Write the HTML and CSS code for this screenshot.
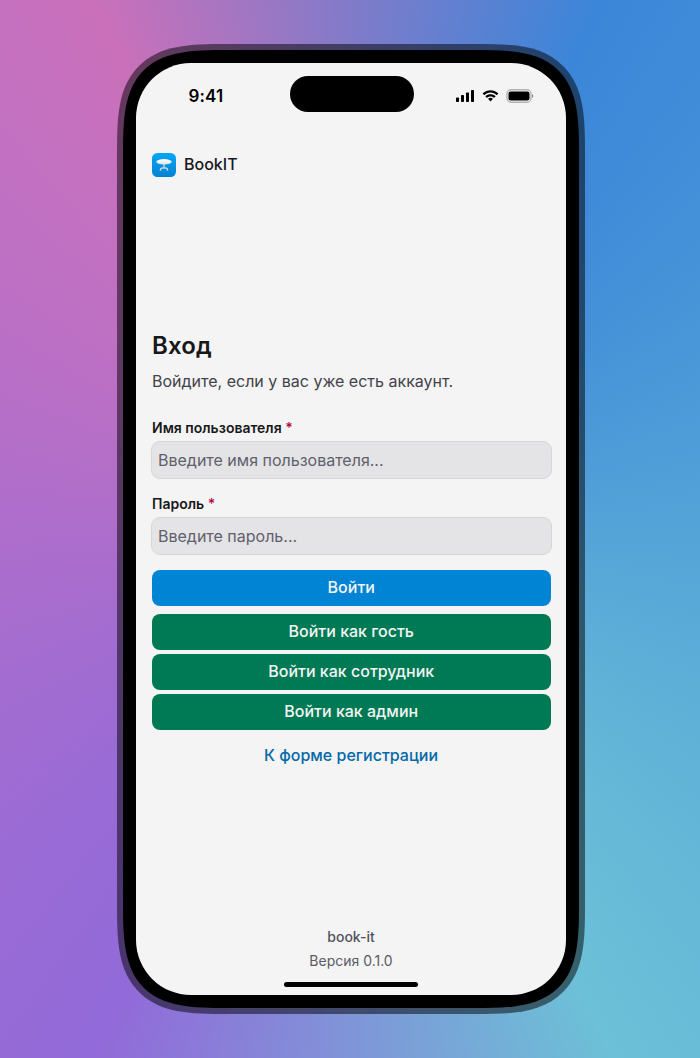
FILE: index.html
```html
<!DOCTYPE html>
<html lang="ru">
<head>
<meta charset="utf-8">
<title>BookIT</title>
<link rel="stylesheet" href="styles.css">
</head>
<body>
<main class="stage">
  <div class="phone">
    <svg class="bezel" viewBox="0 0 468 970" aria-hidden="true">
      <path class="bezel-rim" d="M0 110C0 72 1 43 22 22C43 1 72 0 110 0H358C396 0 425 1 446 22C467 43 468 72 468 110V860C468 898 467 927 446 948C425 969 396 970 358 970H110C72 970 43 969 22 948C1 927 0 898 0 860Z"/>
      <path class="bezel-body" d="M6 110C6 76 7 46 26.500 26.500C46 7 76 6 110 6H358C392 6 422 7 441.500 26.500C461 46 462 76 462 110V860C462 894 461 924 441.500 943.500C422 963 392 964 358 964H110C76 964 46 963 26.500 943.500C7 924 6 894 6 860Z"/>
    </svg>
    <div class="screen">
      <div class="status">
        <span class="clock">9:41</span>
        <span class="island"></span>
        <div class="indicators">
          <svg class="signal" width="18" height="12" viewBox="0 0 18 12"><rect y="7.5" width="3" height="4.5" rx=".8"/><rect x="5" y="5" width="3" height="7" rx=".8"/><rect x="10" y="2.5" width="3" height="9.5" rx=".8"/><rect x="15" width="3" height="12" rx=".8"/></svg>
          <svg class="wifi" width="17" height="12" viewBox="0 0 17 12"><path d="M8.500 2.600c2.300 0 4.400.9 6 2.400.15.12.3.12.43 0l1.200-1.200c.15-.15.15-.35 0-.5C11.900-.7 5.100-.7.87 3.300c-.15.15-.15.35 0 .5l1.200 1.200c.13.12.28.12.43 0 1.600-1.500 3.700-2.400 6-2.400zM8.500 6.500c1.200 0 2.400.5 3.300 1.300.13.12.32.12.44 0l1.200-1.200c.14-.15.14-.36 0-.5-2.800-2.600-7.100-2.600-9.900 0-.14.14-.14.35 0 .5l1.200 1.200c.12.12.31.12.44 0 .9-.8 2.100-1.300 3.320-1.300zM10.800 9.100c.15-.13.14-.35-.02-.47-1.320-1.040-3.240-1.040-4.560 0-.16.12-.17.34-.02.47l2.080 2.100c.12.12.32.12.44 0z"/></svg>
          <svg class="battery" width="28" height="14" viewBox="0 0 28 14"><rect class="battery-case" x="1" y=".75" width="24" height="12.500" rx="4"/><rect x="2.500" y="2.500" width="21" height="9" rx="2.300"/><path class="battery-tip" d="M26 5v4c.8-.3 1.300-1.100 1.300-2s-.5-1.700-1.300-2z"/></svg>
        </div>
      </div>
      <header class="brand">
        <svg class="logo" width="24" height="24" viewBox="0 0 24 24">
          <defs>
            <linearGradient id="tile" x2="0" y2="1"><stop stop-color="#05a7f5"/><stop offset="1" stop-color="#0581d2"/></linearGradient>
            <linearGradient id="table" x2="0" y2="1"><stop stop-color="#fff"/><stop offset="1" stop-color="#dfe5e9"/></linearGradient>
          </defs>
          <rect width="24" height="24" rx="5.500" fill="url(#tile)"/>
          <ellipse cx="12" cy="8.800" rx="7.700" ry="2.700" fill="url(#table)"/>
          <path d="M12 11v3.500M8.500 17.800v-.7q0-2.100 2.100-2.100h2.800q2.100 0 2.100 2.100v.7" fill="none" stroke="#cbd5dc" stroke-width="1.400"/>
        </svg>
        <span class="brand-name">BookIT</span>
      </header>
      <section class="login">
        <h1 class="title">Вход</h1>
        <p class="lead">Войдите, если у вас уже есть аккаунт.</p>
        <form class="form">
          <label class="field"><span class="label">Имя пользователя <span class="required">*</span></span><input class="input" type="text" placeholder="Введите имя пользователя..."></label>
          <label class="field"><span class="label">Пароль <span class="required">*</span></span><input class="input" type="password" placeholder="Введите пароль..."></label>
          <button class="button primary" type="button">Войти</button>
          <div class="alternatives">
            <button class="button success" type="button">Войти как гость</button>
            <button class="button success" type="button">Войти как сотрудник</button>
            <button class="button success" type="button">Войти как админ</button>
          </div>
        </form>
        <a class="register">К форме регистрации</a>
      </section>
      <footer class="footer">
        <span class="app-name">book-it</span>
        <span>Версия 0.1.0</span>
        <span class="home"></span>
      </footer>
    </div>
  </div>
</main>
</body>
</html>
```

FILE: styles.css
```css
* { box-sizing: border-box; }
body { margin: 0; font-family: Inter, "Open Sans", sans-serif; color: #18181b; }
.stage {
  height: 1058px;
  padding: 44px 0 0 117px;
  overflow: hidden;
  background: conic-gradient(from 0deg, #817bc9 0deg, #3c86d9 25.2deg, #6cc0d7 153.500deg, #926ad9 206deg, #c571c0 325deg, #ca70ba 334.300deg, #817bc9 360deg);
}
.phone { position: relative; width: 468px; height: 970px; padding: 19px; }
.bezel { position: absolute; inset: 0; width: 468px; height: 970px; }
.bezel-rim { fill: #000; opacity: .5; }
.bezel-body { fill: #000; }
.screen { position: relative; display: flex; flex-direction: column; width: 430px; height: 932px; border-radius: 55px; background: #f4f4f4; overflow: hidden; }
.status { display: grid; grid-template-columns: 154px 124px 1fr; height: 82px; padding-top: 13px; }
.clock { padding: 9px 0 0 52.500px; font-size: 17px; line-height: 22px; font-weight: 600; letter-spacing: .1px; color: #000; }
.island { height: 36px; border-radius: 18px; background: #000; }
.indicators { display: flex; gap: 8px; padding: 14px 0 0 42px; }
.indicators svg { flex: none; }
.indicators .wifi { margin-left: -.5px; }
.indicators .battery { margin: -1px 0 0 -1px; }
.battery-case { fill: none; stroke: #000; stroke-opacity: .27; stroke-width: 1.300; }
.battery-tip { opacity: .4; }
.brand { display: flex; align-items: center; gap: 8px; height: 40px; padding: 0 16px; font-size: 16px; line-height: 24px; font-weight: 500; }
.brand-name { padding-bottom: 2px; }
.login { display: flex; flex-direction: column; margin-top: 145px; padding: 0 16px; }
.title { margin: 0; font-size: 24px; line-height: 32px; font-weight: 600; letter-spacing: .1px; }
.lead { margin: 7px 0 25px; font-size: 16px; line-height: 24px; color: #42424a; }
.form { display: flex; flex-direction: column; }
.field { display: flex; flex-direction: column; gap: 3px; margin-bottom: 15px; }
.label { font-size: 14px; line-height: 20px; font-weight: 600; }
.required { color: #b00d45; }
.input { height: 38px; margin: 0 -1.500px 0 -1px; padding: 0 6px; border: 1px solid #d7d7da; border-radius: 9px; background: #e4e4e7; font: 400 16px/24px Inter, sans-serif; outline: none; }
.input::placeholder { color: #60606b; opacity: 1; }
.button { height: 36px; padding: 0 0 2px; margin-right: -.5px; border: 0; border-radius: 8px; color: #f4f4f4; font: 500 16px/24px Inter, sans-serif; }
.primary { background: #0284d4; }
.alternatives { display: flex; flex-direction: column; gap: 4px; margin-top: 8px; }
.success { background: #007a55; }
.register { margin-top: 13px; text-align: center; font-size: 16px; line-height: 24px; font-weight: 500; color: #0369a8; }
.footer { display: flex; flex-direction: column; align-items: center; margin-top: auto; padding-bottom: 8px; font-size: 14px; line-height: 24px; color: #5b5b64; }
.app-name { font-weight: 500; color: #52525b; }
.home { width: 134px; height: 5px; margin-top: 9px; border-radius: 3px; background: #000; }
```
